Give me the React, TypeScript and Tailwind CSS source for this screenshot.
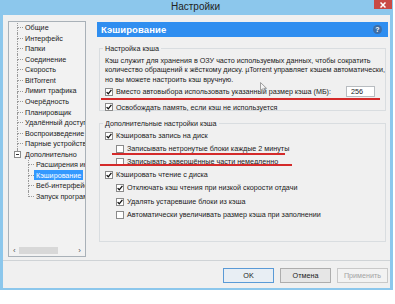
import React from "react";

const treeTop = [
  "Общие",
  "Интерфейс",
  "Папки",
  "Соединение",
  "Скорость",
  "BitTorrent",
  "Лимит трафика",
  "Очерёдность",
  "Планировщик",
  "Удалённый доступ",
  "Воспроизведение",
  "Парные устройства",
];

const treeChildren = ["Расширения интерфейса", "Кэширование", "Веб-интерфейс", "Запуск программы"];

const Connector = ({ last }: { last?: boolean }) => (
  <span className="flex flex-col w-[6px] h-full shrink-0">
    <span className="flex-1 border-l border-b border-dotted border-[#9a9a9a]" />
    <span className={last ? "flex-1" : "flex-1 border-l border-dotted border-[#9a9a9a]"} />
  </span>
);

const Check = ({ checked }: { checked?: boolean }) => (
  <span className="w-[8px] h-[8px] shrink-0 border border-[#8a8a8a] bg-white flex items-center justify-center">
    {checked && (
      <svg width="6" height="6" viewBox="0 0 6 6">
        <path d="M0.6 3.1 L2.3 4.8 L5.4 0.9" stroke="#111" strokeWidth="1.3" fill="none" />
      </svg>
    )}
  </span>
);

const CheckRow = ({ label, checked, indent, className = "" }: { label: string; checked?: boolean; indent?: boolean; className?: string }) => (
  <div className={`flex items-center gap-[3px] h-[13px] ${indent ? "pl-[16px]" : "pl-[5px]"} ${className}`}>
    <Check checked={checked} />
    <span className="whitespace-nowrap">{label}</span>
  </div>
);

const Button = ({ label, kind }: { label: string; kind?: "default" | "disabled" }) => (
  <div
    className={`w-[51px] h-[15px] flex items-center justify-center border ${
      kind === "default"
        ? "border-[#5a9ad6] bg-[#e8eef4]"
        : kind === "disabled"
        ? "border-[#c9c9c9] bg-[#f2f2f2] text-[#a3a3a3]"
        : "border-[#adadad] bg-[#e6e6e6]"
    }`}
  >
    {label}
  </div>
);

export default function App() {
  return (
    <div
      className="w-[395px] h-[304px] bg-white text-[7.2px] leading-none text-[#1b1b1b]"
      style={{ fontFamily: '"Liberation Sans", Arial, sans-serif' }}
    >
      <div className="w-[393px] h-[290px] bg-[#8cc7ec] flex flex-col px-[3px] pb-[2px]">
        {/* title bar */}
        <div className="h-[15px] flex items-start shrink-0">
          <div className="flex-1 text-center text-[10px] text-[#222] pt-[2px] pl-[14px]">Настройки</div>
          <div className="w-[18px] h-[9px] bg-[#c94a45] flex items-center justify-center mr-[-2px]">
            <svg width="6" height="6" viewBox="0 0 6 6">
              <path d="M0.5 0.5 L5.5 5.5 M5.5 0.5 L0.5 5.5" stroke="#fff" strokeWidth="1.5" />
            </svg>
          </div>
        </div>

        {/* client */}
        <div className="flex-1 bg-[#f0f0f0] flex flex-col relative">
          <div className="flex pt-[6px] pl-[5px] pr-[3px] gap-[11px]">
            {/* tree */}
            <div className="w-[78px] h-[236px] border border-[#a9b1b8] bg-[#f2f2f2] flex flex-col">
              <div className="flex-1 overflow-hidden pt-[0.5px] pl-[8px]">
                {treeTop.map((t) => (
                  <div key={t} className="flex items-center h-[10.55px] whitespace-nowrap">
                    <Connector />
                    <span className="ml-[2px]">{t}</span>
                  </div>
                ))}
                <div className="flex items-center h-[10.55px] whitespace-nowrap">
                  <span className="flex flex-col w-[6px] h-full shrink-0">
                    <span className="h-[2px] border-l border-dotted border-[#9a9a9a]" />
                    <span className="w-[7px] h-[7px] -ml-[3px] border border-[#8a8a8a] bg-white flex items-center justify-center">
                      <span className="w-[3px] h-px bg-[#333]" />
                    </span>
                  </span>
                  <span className="ml-[2px]">Дополнительно</span>
                </div>
                <div className="pl-[11px]">
                  {treeChildren.map((t, i) => (
                    <div key={t} className="flex items-center h-[10.55px] whitespace-nowrap">
                      <Connector last={i === treeChildren.length - 1} />
                      <span
                        className={
                          t === "Кэширование"
                            ? "px-[2px] h-[10px] flex items-center bg-[#3399ff] text-white"
                            : "ml-[2px]"
                        }
                      >
                        {t}
                      </span>
                    </div>
                  ))}
                </div>
              </div>
              <div className="h-[9px] flex items-center px-[4px] gap-[3px] text-[#555] mb-[1px]">
                <span className="text-[8px]">‹</span>
                <span className="w-[39px] h-[7px] bg-[#d8d8d8]" />
                <span className="flex-1" />
                <span className="text-[8px]">›</span>
              </div>
            </div>

            {/* right panel */}
            <div className="flex-1 flex flex-col pt-[1px]">
              <div className="h-[15px] bg-[#2f8ef0] flex items-center justify-between pl-[4px] pr-[6px]">
                <span className="text-white text-[9.5px] font-bold tracking-[0.1px]">Кэширование</span>
                <span className="w-[9px] h-[9px] rounded-full bg-[#3f6ea6] text-white text-[7px] font-bold flex items-center justify-center">
                  ?
                </span>
              </div>

              <fieldset className="mx-[2px] mt-[7px] border border-[#d9dde0] h-[67px] pb-0">
                <legend className="ml-[3px] px-[2px] leading-[9px]">Настройка кэша</legend>
                <div className="pl-[5px] pt-[3px] leading-[9.3px]">
                  <div className="whitespace-nowrap">Кэш служит для хранения в ОЗУ часто используемых данных, чтобы сократить</div>
                  <div className="whitespace-nowrap">количество обращений к жёсткому диску. µTorrent управляет кэшем автоматически,</div>
                  <div className="whitespace-nowrap">но вы можете настроить кэш вручную.</div>
                </div>
                <div className="flex items-center gap-[3px] pl-[5px] mt-[1px] h-[14px]">
                  <Check checked />
                  <span className="whitespace-nowrap">Вместо автовыбора использовать указанный размер кэша (МБ):</span>
                  <span className="flex-1" />
                  <span className="w-[29px] h-[11px] border border-[#b8bcc0] bg-white flex items-center pl-[4px] mr-[10px]">256</span>
                </div>
                <CheckRow label="Освобождать память, если кэш не используется" checked className="mt-[2px]" />
              </fieldset>

              <fieldset className="mx-[2px] mt-[8px] border border-[#d9dde0] h-[123px]">
                <legend className="ml-[3px] px-[2px] leading-[9px]">Дополнительные настройки кэша</legend>
                <div className="flex flex-col pt-[1px]">
                  <CheckRow label="Кэшировать запись на диск" checked />
                  <CheckRow label="Записывать нетронутые блоки каждые 2 минуты" indent className="pl-[15px]" />
                  <CheckRow label="Записывать завершённые части немедленно" indent className="pl-[15px]" />
                  <CheckRow label="Кэшировать чтение с диска" checked />
                  <CheckRow label="Отключать кэш чтения при низкой скорости отдачи" checked indent className="h-[14px]" />
                  <CheckRow label="Удалять устаревшие блоки из кэша" checked indent className="h-[13.5px]" />
                  <CheckRow label="Автоматически увеличивать размер кэша при заполнении" indent className="h-[14px]" />
                </div>
              </fieldset>
            </div>
          </div>

          <div className="mt-[3px] border-t border-[#cfd3d6]" />

          <div className="flex justify-end gap-[6px] pr-[2px] pt-[7px]">
            <Button label="OK" kind="default" />
            <Button label="Отмена" />
            <Button label="Применить" kind="disabled" />
          </div>

          {/* red annotation underlines */}
          <div className="absolute left-[98px] top-[83px] w-[279px] h-[2px] bg-[#d42a2a]" />
          <div className="absolute left-[109px] top-[138px] w-[173px] h-[2px] bg-[#d42a2a]" />
          <div className="absolute left-[97px] top-[149px] w-[192px] h-[2px] bg-[#d42a2a]" />

          {/* mouse cursor */}
          <svg className="absolute left-[257px] top-[67px]" width="8" height="11" viewBox="0 0 8 11">
            <path d="M0.5 0.5 L0.5 8.5 L2.5 6.8 L4 10 L5.2 9.4 L3.8 6.3 L6.5 6.3 Z" fill="#f4f4f4" stroke="#8a8a8a" strokeWidth="0.8" />
          </svg>
        </div>
      </div>
    </div>
  );
}
